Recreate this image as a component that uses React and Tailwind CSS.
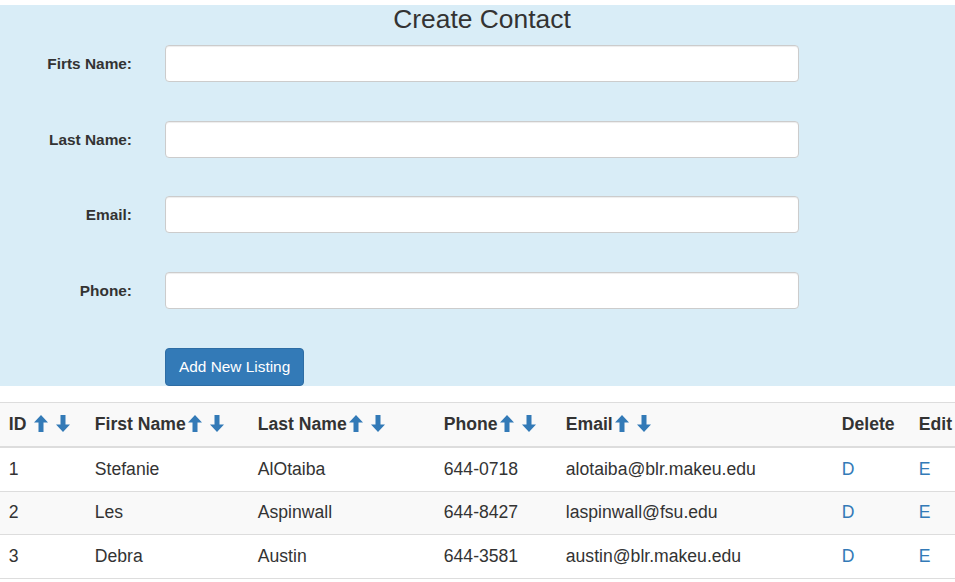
import React from 'react';

const font = { fontFamily: '"Liberation Sans", Arial, sans-serif' };

const ArrowUp = () => (
  <svg width="14" height="17" viewBox="0 0 14 17" className="inline-block align-[-2px] ml-[2px]" fill="#337ab7">
    <path d="M7 0 L14 7.5 L9.5 7.5 L9.5 17 L4.5 17 L4.5 7.5 L0 7.5 Z" />
  </svg>
);

const ArrowDown = () => (
  <svg width="14" height="17" viewBox="0 0 14 17" className="inline-block align-[-2px]" fill="#337ab7">
    <path d="M7 17 L14 9.5 L9.5 9.5 L9.5 0 L4.5 0 L4.5 9.5 L0 9.5 Z" />
  </svg>
);

const fields = ['Firts Name:', 'Last Name:', 'Email:', 'Phone:'];

const contacts = [
  { id: 1, first: 'Stefanie', last: 'AlOtaiba', phone: '644-0718', email: 'alotaiba@blr.makeu.edu' },
  { id: 2, first: 'Les', last: 'Aspinwall', phone: '644-8427', email: 'laspinwall@fsu.edu' },
  { id: 3, first: 'Debra', last: 'Austin', phone: '644-3581', email: 'austin@blr.makeu.edu' },
];

const SortHead = ({ label, gap }) => (
  <th className="px-[8.8px] py-[8.8px] text-left font-bold whitespace-nowrap border-b-2 border-[#ddd]">
    {label}
    {gap && <span className="inline-block w-[6px]" />}
    <ArrowUp />
    <span className="inline-block w-[8px]" />
    <ArrowDown />
  </th>
);

export default function App() {
  return (
    <div className="w-[955px] h-[582px] overflow-hidden bg-white text-[#333]" style={font}>
      <div className="mt-[5px] bg-[#d9edf7] h-[381px] flex flex-col">
        <h3 className="text-[26.4px] leading-[29px] text-center pl-[9px]">Create Contact</h3>
        <div className="flex flex-col gap-[38.7px] mt-[11px]">
          {fields.map((f) => (
            <div key={f} className="flex items-center h-[37px]">
              <label className="w-[132px] text-right text-[15.4px] font-bold">{f}</label>
              <input
                type="text"
                className="ml-[33px] w-[634px] h-[37px] bg-white border border-[#ccc] rounded-[4px] shadow-[inset_0_1px_1px_rgba(0,0,0,0.075)]"
              />
            </div>
          ))}
          <div className="pl-[165px]">
            <button className="h-[38px] px-[13px] bg-[#337ab7] border border-[#2e6da4] rounded-[4px] text-white text-[15.4px] leading-[21px]">
              Add New Listing
            </button>
          </div>
        </div>
      </div>
      <table className="mt-[16px] w-[970px] table-fixed border-collapse text-[17.6px] leading-[25.2px]">
        <colgroup>
          <col className="w-[86px]" />
          <col className="w-[163px]" />
          <col className="w-[186px]" />
          <col className="w-[122px]" />
          <col className="w-[276px]" />
          <col className="w-[77px]" />
          <col className="w-[60px]" />
        </colgroup>
        <thead>
          <tr className="bg-[#f9f9f9] border-t border-[#ddd]">
            <SortHead label="ID" gap />
            <SortHead label="First Name" />
            <SortHead label="Last Name" />
            <SortHead label="Phone" />
            <SortHead label="Email" />
            <th className="px-[8.8px] py-[8.8px] text-left font-bold border-b-2 border-[#ddd]">Delete</th>
            <th className="px-[8.8px] py-[8.8px] text-left font-bold border-b-2 border-[#ddd]">Edit</th>
          </tr>
        </thead>
        <tbody>
          {contacts.map((c, i) => (
            <tr key={c.id} className={i % 2 === 1 ? 'bg-[#f9f9f9]' : 'bg-white'}>
              <td className="px-[8.8px] py-[8.8px] border-b border-[#ddd]">{c.id}</td>
              <td className="px-[8.8px] py-[8.8px] border-b border-[#ddd]">{c.first}</td>
              <td className="px-[8.8px] py-[8.8px] border-b border-[#ddd]">{c.last}</td>
              <td className="px-[8.8px] py-[8.8px] border-b border-[#ddd]">{c.phone}</td>
              <td className="px-[8.8px] py-[8.8px] border-b border-[#ddd]">{c.email}</td>
              <td className="px-[8.8px] py-[8.8px] border-b border-[#ddd] text-[#337ab7]">D</td>
              <td className="px-[8.8px] py-[8.8px] border-b border-[#ddd] text-[#337ab7]">E</td>
            </tr>
          ))}
        </tbody>
      </table>
    </div>
  );
}
